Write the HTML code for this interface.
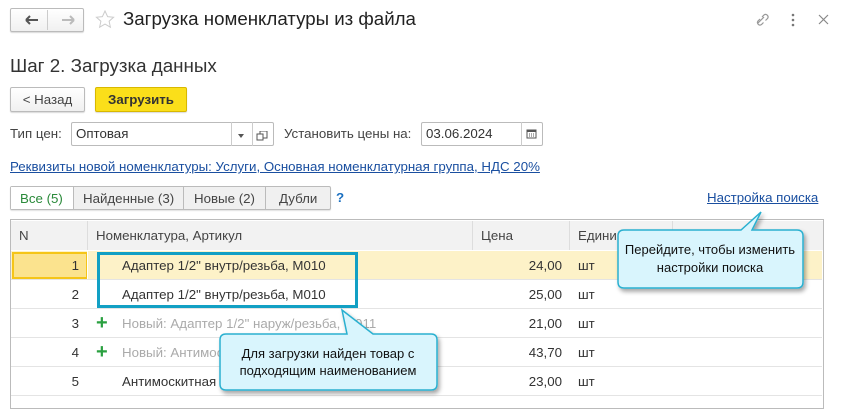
<!DOCTYPE html>
<html><head><meta charset="utf-8"><style>
*{box-sizing:border-box;margin:0;padding:0}
body{width:842px;height:407px;overflow:hidden;background:#fff;font-family:"Liberation Sans",Arial,sans-serif;font-size:13.3px;color:#333;position:relative}
.a{position:absolute;white-space:nowrap}
.btn{position:absolute;border:1px solid #bbb;border-radius:2px;background:linear-gradient(#fff,#f0f0f0);box-shadow:0 1px 1px rgba(0,0,0,.15);text-align:center}
a{color:#1a4fa0;text-decoration:underline}
.th{position:absolute;top:221px;height:29px;line-height:29px;padding-left:8px;color:#444;border-right:1px solid #ddd;background:#f2f2f2}
.row{position:absolute;left:11px;width:811px;height:29px;border-bottom:1px solid #e4e4e4}
</style></head><body>
<div class="btn" style="left:10px;top:8px;width:74px;height:24px"></div>
<div class="a" style="left:47px;top:10px;height:20px;border-left:1px solid #ccc"></div>
<svg class="a" style="left:20px;top:14px" width="60" height="12"><path d="M6 6h12M6 6l4-4M6 6l4 4" stroke="#555" stroke-width="2" fill="none"/><path d="M42 6h12M54 6l-4-4M54 6l-4 4" stroke="#bbb" stroke-width="2" fill="none"/></svg>
<svg class="a" style="left:95px;top:10px" width="20" height="20"><path d="M10 1l2.6 5.6 6 .6-4.5 4 1.3 6-5.4-3.1-5.4 3.1 1.3-6-4.5-4 6-.6z" fill="none" stroke="#ccc"/></svg>
<div class="a" style="left:123px;top:8px;font-size:18.7px;color:#222">Загрузка номенклатуры из файла</div>
<svg class="a" style="left:754px;top:11px" width="80" height="18"><path d="M4 12l6-6M6 8l-2 2a2.5 2.5 0 0 0 3.5 3.5l2-2M8 6l2-2a2.5 2.5 0 0 1 3.5 3.5l-2 2" stroke="#999" fill="none" stroke-width="1.2"/><circle cx="39" cy="4" r="1.3" fill="#777"/><circle cx="39" cy="9" r="1.3" fill="#777"/><circle cx="39" cy="14" r="1.3" fill="#777"/><path d="M65 4l9 9M74 4l-9 9" stroke="#888" stroke-width="1.2"/></svg>
<div class="a" style="left:10px;top:55px;font-size:18.8px;color:#333">Шаг 2. Загрузка данных</div>
<div class="btn" style="left:10px;top:87px;width:75px;height:25px;line-height:23px;color:#444">&lt; Назад</div>
<div class="btn" style="left:95px;top:87px;width:92px;height:25px;line-height:23px;background:#fbdf1a;border-color:#d8b800;font-weight:bold;color:#333">Загрузить</div>
<div class="a" style="left:10px;top:126px;color:#444">Тип цен:</div>
<div class="a" style="left:71px;top:122px;width:203px;height:24px;border:1px solid #bbb;border-radius:2px"></div>
<div class="a" style="left:231px;top:122px;height:24px;border-left:1px solid #ccc"></div>
<div class="a" style="left:252px;top:122px;height:24px;border-left:1px solid #ccc"></div>
<div class="a" style="left:76px;top:126px;color:#333">Оптовая</div>
<svg class="a" style="left:236px;top:131px" width="34" height="10"><path d="M2 3h6l-3 4z" fill="#555"/><rect x="24" y="0" width="7" height="7" fill="none" stroke="#555"/><rect x="21" y="3" width="6" height="6" fill="#fff" stroke="#555"/></svg>
<div class="a" style="left:284px;top:126px;color:#444">Установить цены на:</div>
<div class="a" style="left:421px;top:122px;width:122px;height:24px;border:1px solid #bbb;border-radius:2px"></div>
<div class="a" style="left:521px;top:122px;height:24px;border-left:1px solid #ccc"></div>
<div class="a" style="left:426px;top:126px">03.06.2024</div>
<svg class="a" style="left:526px;top:128px" width="12" height="12"><rect x="1" y="2" width="9" height="8" fill="none" stroke="#555"/><rect x="1" y="2" width="9" height="2" fill="#555"/><path d="M3 6h1M5 6h1M7 6h1M3 8h1M5 8h1M7 8h1" stroke="#555"/></svg>
<a class="a" style="left:10px;top:159px">Реквизиты новой номенклатуры: Услуги, Основная номенклатурная группа, НДС 20%</a>
<div class="a" style="left:10px;top:186px;width:321px;height:24px;border:1px solid #bbb;border-radius:2px;background:#f0f0f0;box-shadow:0 1px 1px rgba(0,0,0,.12)"></div>
<div class="a" style="left:11px;top:187px;width:62px;height:22px;background:#fff"></div>
<div class="a" style="left:73px;top:187px;height:22px;border-left:1px solid #bbb"></div>
<div class="a" style="left:183px;top:187px;height:22px;border-left:1px solid #bbb"></div>
<div class="a" style="left:265px;top:187px;height:22px;border-left:1px solid #bbb"></div>
<div class="a" style="left:20px;top:191px;color:#2a8a3a">Все (5)</div>
<div class="a" style="left:83px;top:191px;color:#444">Найденные (3)</div>
<div class="a" style="left:194px;top:191px;color:#444">Новые (2)</div>
<div class="a" style="left:279px;top:191px;color:#444">Дубли</div>
<div class="a" style="left:336px;top:190px;color:#1a6fc0;font-weight:bold">?</div>
<a class="a" style="left:707px;top:190px">Настройка поиска</a>
<div class="a" style="left:10px;top:219px;width:814px;height:190px;border:1px solid #bbb"></div>
<div class="th" style="left:11px;width:77px">N</div>
<div class="th" style="left:88px;width:385px">Номенклатура, Артикул</div>
<div class="th" style="left:473px;width:97px">Цена</div>
<div class="th" style="left:570px;width:103px">Единица</div>
<div class="th" style="left:673px;width:150px;border-right:0"></div>
<div class="row" style="top:251px;background:#fdf2c8"><div class="a" style="left:1px;top:1px;width:76px;height:27px;background:#fbe38e;border:2px solid #f5c518"></div><div class="a" style="left:76px;top:0;height:28px;border-left:1px solid #fff"></div></div>
<div class="row" style="top:280px"></div><div class="row" style="top:309px"></div><div class="row" style="top:338px"></div><div class="row" style="top:367px"></div>
<div class="a" style="left:10px;top:251px;width:69px;text-align:right;line-height:29px">1<br>2<br>3<br>4<br>5</div>
<div class="a" style="left:122px;top:251px;line-height:29px">Адаптер 1/2" внутр/резьба, М010<br>Адаптер 1/2" внутр/резьба, М010<br><span style="color:#aaa">Новый: Адаптер 1/2" наруж/резьба, М011</span><br><span style="color:#aaa">Новый: Антимоскитная сетка 1,2х1,5 м, 0244</span><br>Антимоскитная сетка</div>
<div class="a" style="left:96px;top:309px;color:#2aa040;font-size:20px;font-weight:bold;line-height:29px">+<br>+</div>
<div class="a" style="left:480px;top:251px;width:82px;text-align:right;line-height:29px">24,00<br>25,00<br>21,00<br>43,70<br>23,00</div>
<div class="a" style="left:578px;top:251px;line-height:29px">шт<br>шт<br>шт<br>шт<br>шт</div>
<div class="a" style="left:97px;top:252px;width:261px;height:56px;border:3px solid #12a0c4"></div>
<svg class="a" style="left:0;top:0" width="842" height="407">
<defs><filter id="s"><feDropShadow dx="2" dy="3" stdDeviation="2" flood-opacity=".35"/></filter></defs>
<path d="M226 334H347L342 310L373 334H431Q437 334 437 340V384Q437 390 431 390H226Q220 390 220 384V340Q220 334 226 334Z" fill="#d9f5fd" stroke="#2bb0d0" stroke-width="1.5" filter="url(#s)"/>
<path d="M624 230H741L761 212L752 230H797Q803 230 803 236V282Q803 288 797 288H624Q618 288 618 282V236Q618 230 624 230Z" fill="#d9f5fd" stroke="#2bb0d0" stroke-width="1.5" filter="url(#s)"/>
<text x="328" y="358" font-family="Liberation Sans,sans-serif" font-size="13" fill="#111" text-anchor="middle">Для загрузки найден товар с</text>
<text x="328" y="375" font-family="Liberation Sans,sans-serif" font-size="13" fill="#111" text-anchor="middle">подходящим наименованием</text>
<text x="710" y="254" font-family="Liberation Sans,sans-serif" font-size="13" fill="#111" text-anchor="middle">Перейдите, чтобы изменить</text>
<text x="710" y="272" font-family="Liberation Sans,sans-serif" font-size="13" fill="#111" text-anchor="middle">настройки поиска</text>
</svg>
</body></html>
